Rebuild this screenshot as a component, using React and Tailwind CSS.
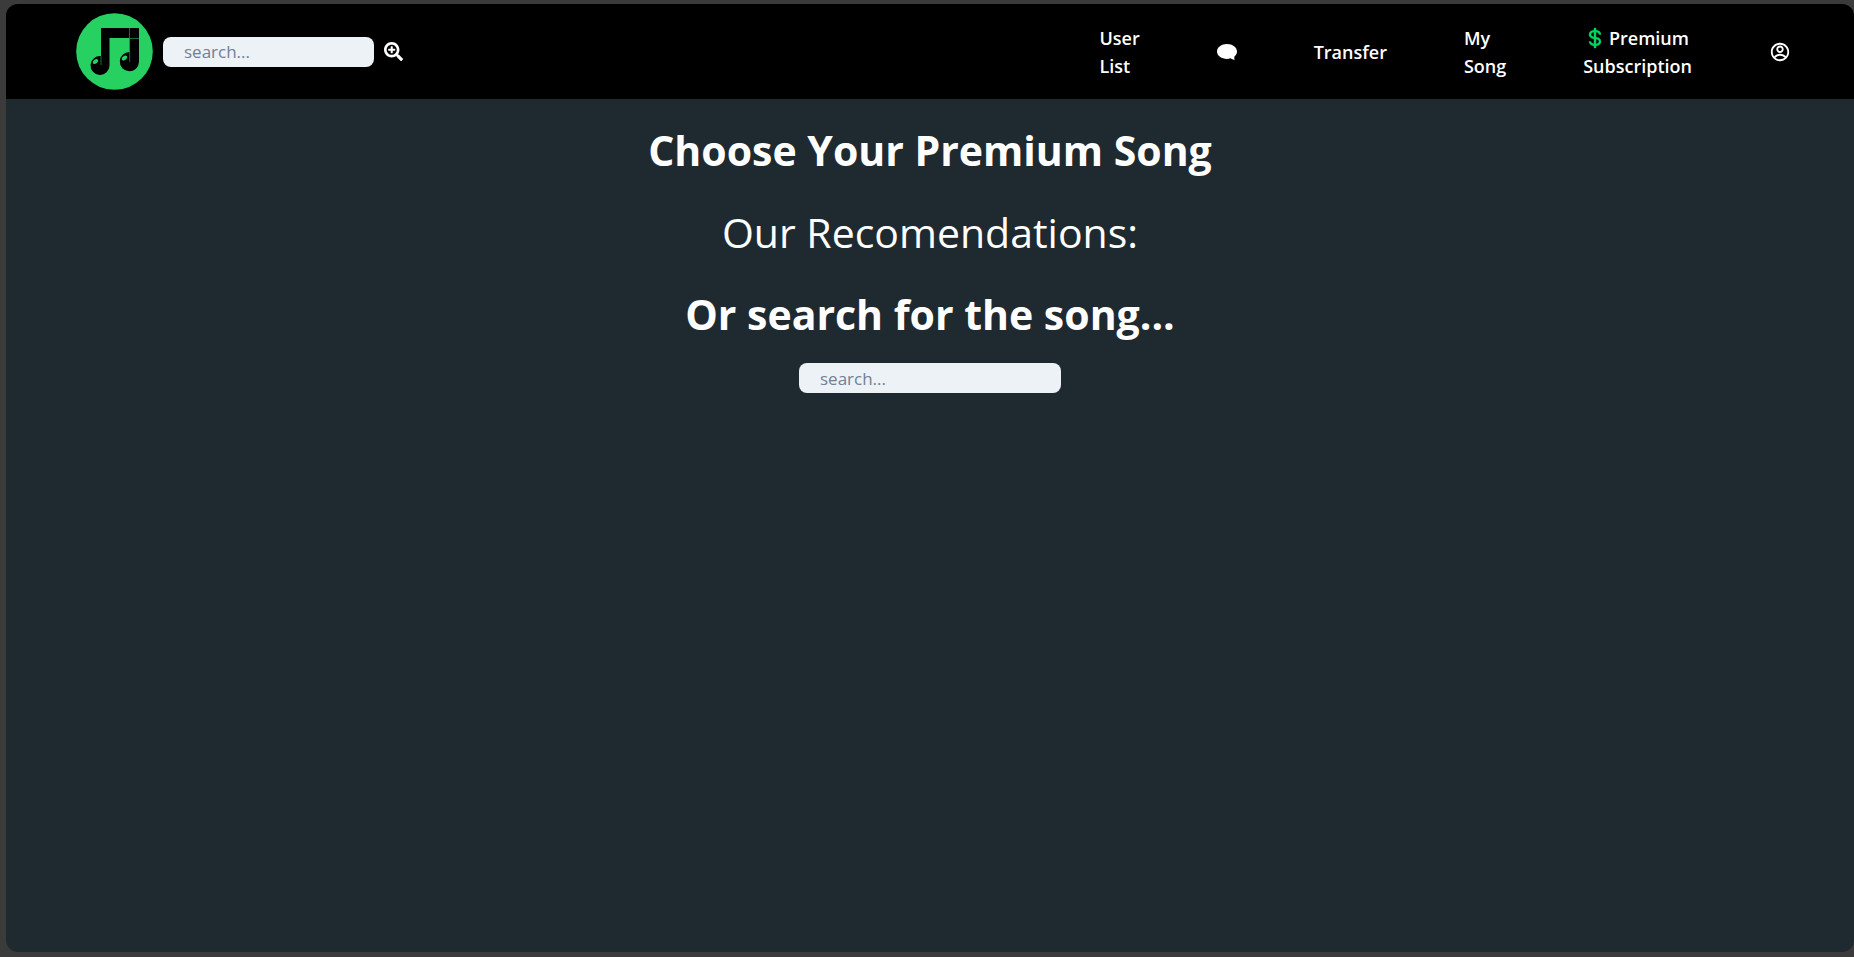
import { FaSearchPlus } from "react-icons/fa";
import { BiDollar } from "react-icons/bi";
import { RiAccountCircleLine } from "react-icons/ri";

function Logo() {
  return (
    <svg viewBox="0 0 77 77" className="size-[77px] shrink-0" role="img" aria-label="Home">
      <circle cx="38.5" cy="38.5" r="38.3" fill="#26d162" />
      <path d="M25 15H63V49a9.600 9.600 0 1 1-9.300-10V25H33.500V52.500A9.500 9.500 0 1 1 25 43Z" fill="#000" />
      <ellipse cx="19.500" cy="48.500" rx="3" ry="2" transform="rotate(-40 19.500 48.500)" fill="#26d162" />
      <ellipse cx="48.500" cy="45" rx="3" ry="2" transform="rotate(-40 48.500 45)" fill="#26d162" />
      <path d="M25 43v9M53.700 39v10M53.500 15v10.500h9.500" fill="none" stroke="#178a42" strokeWidth="0.8" />
    </svg>
  );
}

function ChatBubble() {
  return (
    <svg viewBox="0 0 20 20" className="size-5" fill="currentColor" aria-hidden="true">
      <path d="M10 2C15.500 2 20 5.200 20 9.500c0 2-1 3.800-2.600 5.100-.3 1-.1 2.200.2 3.300-1.600-.2-3-.8-4.200-1.600-1.100.4-2.200.6-3.400.6C4.500 16.900 0 13.800 0 9.500S4.500 2 10 2Z" />
    </svg>
  );
}

const field =
  "h-[30px] rounded-lg bg-[#edf2f7] px-[21px] pt-0.5 pb-0.5 text-[17px] leading-6 text-gray-700 placeholder:text-[#718096] outline-none";

export default function App() {
  return (
    <div className="flex min-h-screen flex-col bg-[#3b3b3b] pt-1 pb-[5px] pl-1.5 font-['Open_Sans','Noto_Sans',sans-serif] text-white">
      <div className="flex grow flex-col overflow-hidden rounded-xl bg-[#1f2a30]">
        <header className="flex h-[95px] items-center justify-between bg-black pr-[63px] pl-[70px]">
          <form className="flex items-center gap-2.5" onSubmit={(e) => e.preventDefault()}>
            <a href="#home"><Logo /></a>
            <input type="search" aria-label="Search songs" placeholder="search..." className={`${field} w-[211px]`} />
            <button type="submit" aria-label="Search"><FaSearchPlus size={19} /></button>
          </form>
          <nav className="flex items-center gap-[77px] text-lg leading-7 font-semibold">
            <a href="#users">User<br />List</a>
            <a href="#chat" aria-label="Chat"><ChatBubble /></a>
            <a href="#transfer">Transfer</a>
            <a href="#songs">My<br />Song</a>
            <a href="#premium" className="text-center">
              <BiDollar size={24} strokeWidth={0.4} className="-mx-[3px] inline align-[-5px] text-[#00d563]" /> Premium<br />Subscription
            </a>
            <a href="#profile" aria-label="Profile"><RiAccountCircleLine size={22} /></a>
          </nav>
        </header>
        <main className="flex flex-col items-center pt-[18px] text-center text-[41px] leading-[66px]">
          <h1 className="font-bold">Choose Your Premium Song</h1>
          <h2 className="mt-4">Our Recomendations:</h2>
          <h2 className="mt-4 font-bold">Or search for the song...</h2>
          <input type="search" aria-label="Search premium songs" placeholder="search..." className={`${field} mt-4 w-[262px]`} />
        </main>
      </div>
    </div>
  );
}
